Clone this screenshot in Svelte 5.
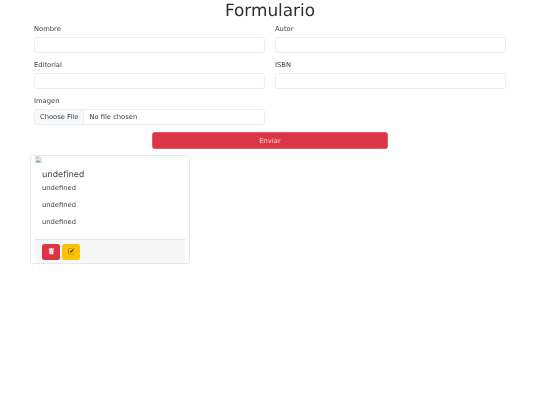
<script lang="ts">
	const rows = [
		[{ label: 'Nombre' }, { label: 'Autor' }],
		[{ label: 'Editorial' }, { label: 'ISBN' }]
	];
	const lines = ['undefined', 'undefined', 'undefined'];
</script>

<main class="page">
	<h1>Formulario</h1>
	<form onsubmit={(e) => e.preventDefault()}>
		{#each rows as row}
			<div class="row">
				{#each row as field}
					<div class="field">
						<label for={field.label}>{field.label}</label>
						<input id={field.label} type="text" />
					</div>
				{/each}
			</div>
		{/each}
		<div class="row">
			<div class="field">
				<span class="label">Imagen</span>
				<div class="file">
					<span class="file-btn">Choose File</span>
					<span class="file-name">No file chosen</span>
				</div>
			</div>
		</div>
		<button class="submit" type="submit">Enviar</button>
	</form>

	<section class="card">
		<svg class="broken" viewBox="0 0 16 16" width="7" height="7" aria-hidden="true">
			<path d="M1 1h9l4 4v10H1z" fill="#e4e8ee" stroke="#b9c2cf" stroke-width="1.2" />
			<path d="M2 14l4-5 3 3 2-2 2 4z" fill="#6cb06c" />
			<circle cx="6" cy="5" r="2" fill="#a3c2ec" />
		</svg>
		<div class="card-body">
			<h5>undefined</h5>
			{#each lines as line}
				<p>{line}</p>
			{/each}
		</div>
		<div class="card-footer">
			<button class="icon-btn danger" type="button" aria-label="Borrar">
				<svg viewBox="0 0 16 16" width="6.75" height="6.75" fill="#fbdfe2">
					<path d="M2.5 1a1 1 0 0 0-1 1v1a1 1 0 0 0 1 1H3v9a2 2 0 0 0 2 2h6a2 2 0 0 0 2-2V4h.5a1 1 0 0 0 1-1V2a1 1 0 0 0-1-1H10a1 1 0 0 0-1-1H7a1 1 0 0 0-1 1H2.5z" />
				</svg>
			</button>
			<button class="icon-btn warning" type="button" aria-label="Editar">
				<svg viewBox="0 0 16 16" width="6.75" height="6.75" fill="#3d3a1e">
					<path d="M15.5.6a1.4 1.4 0 0 0-2 0L12.6 1.5l2 2 .9-.9a1.4 1.4 0 0 0 0-2zM13.9 4.2l-2-2L5 9.1V11h1.9l7-6.8z" />
					<path fill-rule="evenodd" d="M1 13.5A1.5 1.5 0 0 0 2.5 15h11a1.5 1.5 0 0 0 1.5-1.5v-6a.5.5 0 0 0-1 0v6a.5.5 0 0 1-.5.5h-11a.5.5 0 0 1-.5-.5v-11a.5.5 0 0 1 .5-.5H9a.5.5 0 0 0 0-1H2.5A1.5 1.5 0 0 0 1 2.5v11z" />
				</svg>
			</button>
		</div>
	</section>
</main>

<style>
	:global(body) {
		margin: 0;
		background: #fff;
		color: #3e4347;
		font-family: "DejaVu Sans", sans-serif;
		font-size: 6.75px;
		line-height: 1.5;
		text-rendering: geometricPrecision;
	}

	/* own layer, so text gets grey antialiasing instead of colour fringes */
	.page {
		will-change: opacity;
	}

	h1 {
		margin: 0 0 3.5px;
		font-size: 16.875px;
		font-weight: 400;
		line-height: 1.2;
		text-align: center;
		color: #2b3035;
	}

	form {
		display: flex;
		flex-direction: column;
		gap: 6.75px;
		padding: 0 34px;
	}

	.row {
		display: grid;
		grid-template-columns: 1fr 1fr;
		gap: 10px;
	}

	.field {
		display: flex;
		flex-direction: column;
		gap: 3.4px;
	}

	label,
	.label {
		display: block;
		height: 10px;
	}

	input,
	.file {
		box-sizing: border-box;
		height: 16px;
		width: 100%;
		margin: 0;
		padding: 0;
		background: #fff;
		border: 0.5px solid #eceef0;
		border-radius: 2.5px;
		outline: none;
	}

	.file {
		display: flex;
		align-items: center;
		overflow: hidden;
	}

	.file-btn {
		display: flex;
		align-items: center;
		height: 100%;
		padding: 0 5px;
		background: #f8f9fa;
		border-right: 0.5px solid #eceef0;
	}

	.file-name {
		padding-left: 5px;
	}

	.submit {
		align-self: center;
		box-sizing: border-box;
		width: 236px;
		height: 17px;
		padding: 0;
		background: #dc3545;
		border: 0.5px solid #e25c69;
		border-radius: 2.5px;
		color: #f8d7da;
		font: inherit;
	}

	.card {
		display: flex;
		flex-direction: column;
		box-sizing: border-box;
		width: 160px;
		height: 109px;
		margin: 6px 0 0 30px;
		padding: 0 4px;
		border: 0.5px solid #e6e8ea;
		border-radius: 2.5px;
	}

	.broken {
		display: block;
		flex: none;
	}

	.card-body {
		flex: 1;
		padding: 6px 7px 0;
	}

	h5 {
		margin: 0 0 4px;
		font-size: 8.44px;
		font-weight: 400;
		line-height: 1.2;
	}

	p {
		margin: 0 0 6.75px;
	}

	.card-footer {
		display: flex;
		gap: 2px;
		height: 24px;
		box-sizing: border-box;
		padding: 3.5px 7px;
		background: #f7f7f7;
		border-top: 0.5px solid #e4e5e6;
	}

	.icon-btn {
		display: flex;
		align-items: center;
		justify-content: center;
		width: 18px;
		height: 16px;
		padding: 0;
		border: 0;
		border-radius: 2.5px;
	}

	.danger {
		background: #dc3545;
	}

	.warning {
		background: #ffc107;
	}
</style>
